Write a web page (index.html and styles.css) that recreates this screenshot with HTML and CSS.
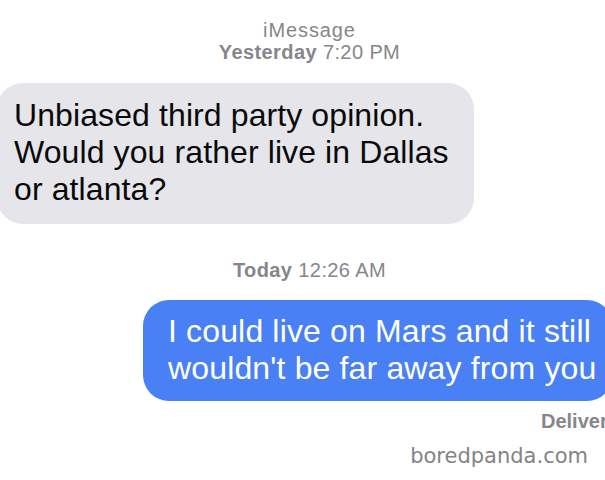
FILE: index.html
```html
<!DOCTYPE html>
<html lang="en">
<head>
    <meta charset="UTF-8">
    <title>iMessage</title>
    <link rel="stylesheet" href="styles.css">
</head>
<body>
<div class="chat">
    <div class="stamp">
        <div class="service">iMessage</div>
        <div><b>Yesterday</b> 7:20 PM</div>
    </div>

    <div class="bubble received">
        Unbiased third party opinion.<br>
        Would you rather live in Dallas<br>
        or atlanta?
    </div>

    <div class="stamp today"><b>Today</b> 12:26 AM</div>

    <div class="bubble sent">
        I could live on Mars and it still<br>
        wouldn't be far away from you
    </div>

    <div class="status">Delivered</div>

    <div class="watermark">boredpanda.com</div>
</div>
</body>
</html>
```

FILE: styles.css
```css
body {
    margin: 0;
    background: #fff;
    font-family: "Liberation Sans", Arial, sans-serif;
}

.chat {
    width: 605px;
    height: 480px;
    overflow: hidden;
}

.stamp {
    padding: 19px 0 0 14px;
    text-align: center;
    font-size: 20px;
    line-height: 22px;
    letter-spacing: 0.4px;
    color: #86868b;
}

.stamp .service {
    letter-spacing: 0.9px;
}

.stamp.today {
    padding-top: 35px;
}

.bubble {
    box-sizing: border-box;
    font-size: 32px;
    line-height: 37px;
    white-space: nowrap;
    border-radius: 26px;
}

.received {
    width: 477px;
    margin: 20px 0 0 -3px;
    padding: 14px 0 16px 17px;
    background: #e5e5ea;
    color: #0a0a0a;
    letter-spacing: 0.1px;
}

.sent {
    width: 470px;
    margin: 19px 0 0 143px;
    padding: 13px 0 14px 25px;
    background: #4a80f5;
    color: #fff;
    letter-spacing: 0.15px;
}

.status {
    margin-top: 9px;
    padding-left: 541px;
    font-size: 20px;
    line-height: 22px;
    font-weight: bold;
    color: #86868b;
    white-space: nowrap;
}

.watermark {
    margin-top: 12px;
    padding-right: 17px;
    text-align: right;
    font-family: "DejaVu Sans", sans-serif;
    font-size: 21px;
    line-height: 24px;
    color: #848484;
}
```
